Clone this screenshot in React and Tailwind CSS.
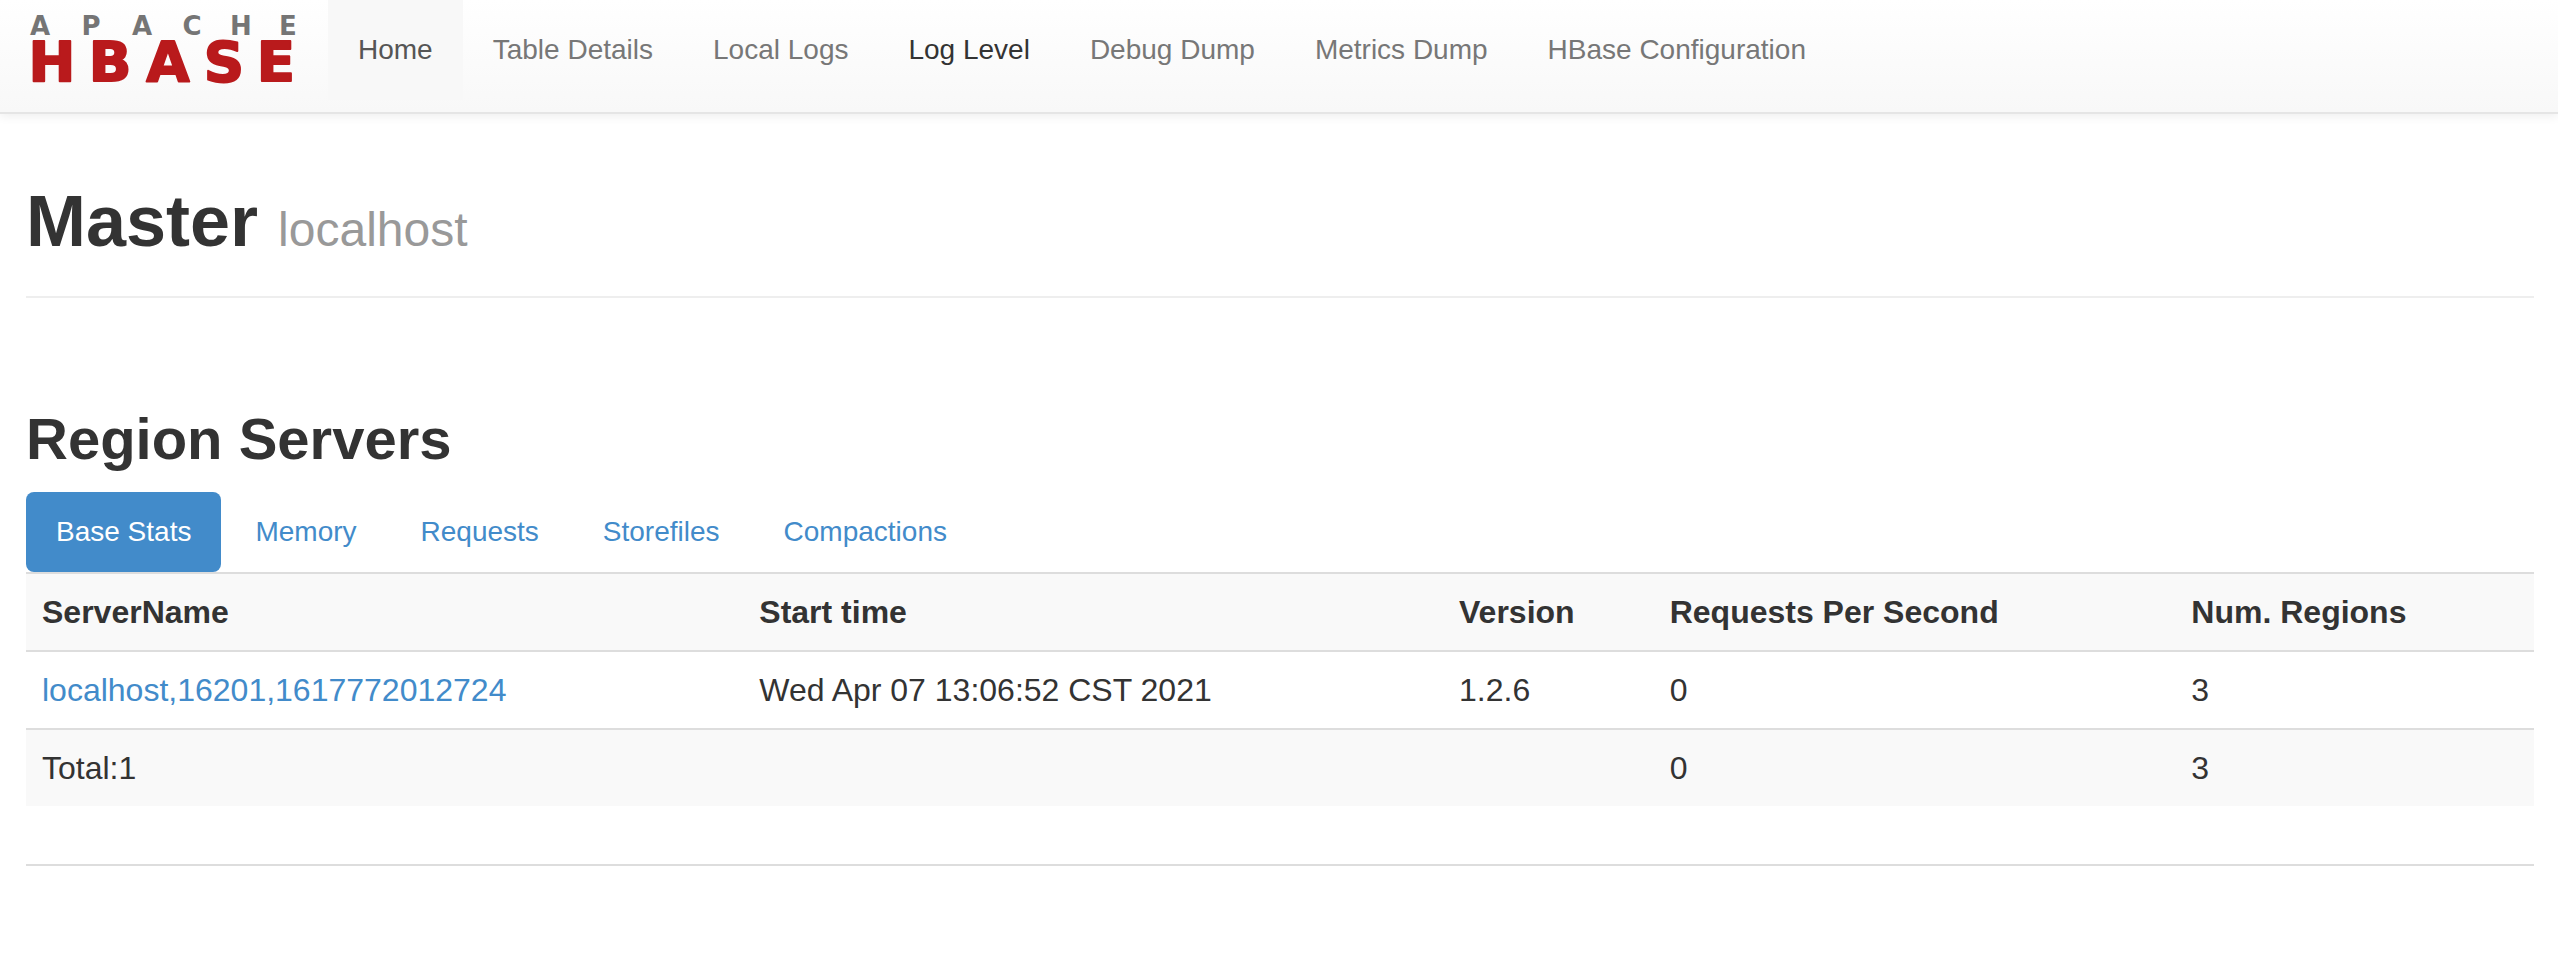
const NAV_LINKS = [
  { label: 'Home', tone: 'bg-[#f8f8f8] text-[#555555]' },
  { label: 'Table Details', tone: 'text-[#777777]' },
  { label: 'Local Logs', tone: 'text-[#777777]' },
  { label: 'Log Level', tone: 'text-[#333333]' },
  { label: 'Debug Dump', tone: 'text-[#777777]' },
  { label: 'Metrics Dump', tone: 'text-[#777777]' },
  { label: 'HBase Configuration', tone: 'text-[#777777]' },
];

const TABS = ['Base Stats', 'Memory', 'Requests', 'Storefiles', 'Compactions'];

const COLUMNS = [
  { label: 'ServerName', width: 'w-[28.6%]' },
  { label: 'Start time', width: 'w-[27.9%]' },
  { label: 'Version', width: 'w-[8.4%]' },
  { label: 'Requests Per Second', width: 'w-[20.8%]' },
  { label: 'Num. Regions', width: 'w-[14.3%]' },
];

function Logo() {
  return (
    <svg
      className="overflow-visible"
      width="268"
      height="66"
      viewBox="0 0 268 66"
      role="img"
      aria-label="Apache HBase"
      fontFamily="'DejaVu Sans', sans-serif"
      fontWeight="700"
      textAnchor="middle"
      strokeLinejoin="round"
    >
      <text x="10 61 112 162 211 258" y="19" fontSize="26" fill="#757575">
        APACHE
      </text>
      <text x="22 80 138 194 246" y="65" fontSize="56" fill="#b91a1c" stroke="#b91a1c" strokeWidth="2">
        HBASE
      </text>
    </svg>
  );
}

function NavBar() {
  return (
    <header className="border-b-2 border-[#e5e5e5] bg-linear-to-b from-white to-[#f8f8f8] pb-3 shadow-[0_2px_10px_rgba(0,0,0,0.075)]">
      <nav className="flex items-start pl-[30px]">
        <a href="#home" className="mr-[30px] pt-4">
          <Logo />
        </a>
        <ul className="flex">
          {NAV_LINKS.map(({ label, tone }) => (
            <li key={label}>
              <a href="#nav" className={`block px-[30px] py-[30px] text-[28px] leading-10 ${tone}`}>
                {label}
              </a>
            </li>
          ))}
        </ul>
      </nav>
    </header>
  );
}

function RegionServers() {
  return (
    <section className="pt-[108px]">
      <h2 className="text-[58px] leading-[66px] font-bold">Region Servers</h2>
      <ul className="mt-5 flex gap-1">
        {TABS.map((tab, i) => (
          <li key={tab}>
            <a
              href="#tab"
              className={`block rounded-lg px-[30px] py-5 text-[28px] leading-10 ${
                i === 0 ? 'bg-[#428bca] text-white' : 'text-[#428bca]'
              }`}
            >
              {tab}
            </a>
          </li>
        ))}
      </ul>
      <table className="w-full table-fixed text-left text-[32px] leading-[44px]">
        <thead>
          <tr className="border-t-2 border-[#dddddd] bg-[#f9f9f9]">
            {COLUMNS.map(({ label, width }) => (
              <th key={label} scope="col" className={`p-4 font-bold ${width}`}>
                {label}
              </th>
            ))}
          </tr>
        </thead>
        <tbody>
          <tr className="border-t-2 border-[#dddddd]">
            <td className="p-4">
              <a href="#server" className="text-[#428bca]">
                localhost,16201,1617772012724
              </a>
            </td>
            <td className="p-4">Wed Apr 07 13:06:52 CST 2021</td>
            <td className="p-4">1.2.6</td>
            <td className="p-4">0</td>
            <td className="p-4">3</td>
          </tr>
          <tr className="border-t-2 border-[#dddddd] bg-[#f9f9f9]">
            <td className="p-4">Total:1</td>
            <td className="p-4" />
            <td className="p-4" />
            <td className="p-4">0</td>
            <td className="p-4">3</td>
          </tr>
        </tbody>
      </table>
      <hr className="mt-[58px] border-t-2 border-[#dddddd]" />
    </section>
  );
}

export default function App() {
  return (
    <div className="min-h-screen bg-white font-['Helvetica_Neue','Liberation_Sans',Arial,sans-serif] text-[#333333]">
      <NavBar />
      <main className="pt-[67px] pr-6 pb-20 pl-[26px]">
        <h1 className="border-b-2 border-[#eeeeee] pb-[35px] text-[72px] leading-[80px] font-bold">
          Master <small className="text-[48px] leading-none font-normal text-[#999999]">localhost</small>
        </h1>
        <RegionServers />
      </main>
    </div>
  );
}
